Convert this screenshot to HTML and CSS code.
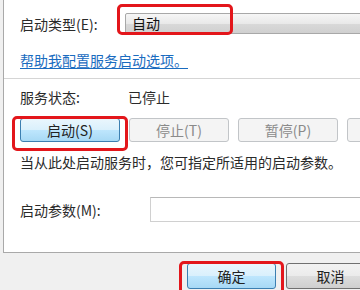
FILE: index.html
```html
<!DOCTYPE html>
<html lang="zh-CN">
<head>
<meta charset="utf-8">
<link rel="stylesheet" href="styles.css">
</head>
<body>
<div class="page">
  <div class="panel">
    <div class="row row-type">
      <span class="label label-type">启动类型(E):</span>
      <div class="select"><span class="select-text">自动</span></div>
    </div>
    <div class="row row-link"><a class="link" href="#">帮助我配置服务启动选项。</a></div>
    <div class="sep"></div>
    <div class="row row-status">
      <span class="label label-status">服务状态:</span>
      <span class="value">已停止</span>
    </div>
    <div class="row row-buttons">
      <button class="btn btn-hot">启动(S)</button>
      <button class="btn btn-off">停止(T)</button>
      <button class="btn btn-off">暂停(P)</button>
      <button class="btn btn-off" aria-label="恢复(R)"></button>
    </div>
    <div class="row row-hint">当从此处启动服务时，您可指定所适用的启动参数。</div>
    <div class="row row-param">
      <span class="label label-param">启动参数(M):</span>
      <div class="input"></div>
    </div>
    <div class="mark mark-select"></div>
    <div class="mark mark-start"></div>
  </div>
  <div class="footer">
    <button class="btn btn-hot btn-foot">确定</button>
    <button class="btn btn-foot">取消</button>
    <div class="mark mark-ok"></div>
  </div>
</div>
</body>
</html>
```

FILE: styles.css
```css
html, body {
  margin: 0;
  padding: 0;
}
body {
  width: 360px;
  height: 290px;
  overflow: hidden;
  background: #f0f0f0;
  font-family: "Noto Sans CJK SC", "Noto Sans", sans-serif;
  font-size: 14px;
  color: #2a2a2a;
}
.page {
  width: 360px;
  height: 290px;
  overflow: hidden;
  position: relative;
}
.panel {
  position: relative;
  margin-left: 3px;
  width: 420px;
  height: 252px;
  background: #fff;
  border-left: 1px solid #a9a9a9;
  border-bottom: 1px solid #a9a9a9;
  display: flex;
  flex-direction: column;
}
.row {
  display: flex;
  align-items: center;
  padding-left: 16px;
  line-height: 20px;
  white-space: nowrap;
}
.row-type {
  margin-top: 13px;
  height: 21px;
}
.label-type { width: 105px; }
.select {
  flex: 1;
  height: 19px;
  border: 1px solid #a8a8a8;
  border-radius: 2px;
  background: linear-gradient(#f6f6f6, #e9e9e9 50%, #d9d9d9 51%, #d0d0d0);
  display: flex;
  align-items: center;
  padding-left: 6px;
}
.select-text { color: #111; line-height: 19px; }
.row-link { margin-top: 16px; height: 20px; }
.link {
  color: #1a6cc0;
  text-decoration: underline;
  text-underline-offset: 2px;
}
.sep {
  margin-top: 8px;
  height: 1px;
  background: #d5d5d5;
}
.row-status { margin-top: 8px; height: 20px; }
.label-status { width: 108px; }
.row-buttons {
  margin-top: 11px;
  gap: 9px;
}
.btn {
  width: 100px;
  height: 24px;
  padding: 0;
  font-family: "Noto Sans CJK SC", "Noto Sans", sans-serif;
  font-size: 14px;
  line-height: 20px;
  color: #222;
  border: 1px solid #707070;
  border-radius: 3px;
  background: linear-gradient(#f2f2f2, #ebebeb 50%, #dddddd 51%, #cfcfcf);
  flex: none;
}
.btn-hot {
  border-color: #3c7fb1;
  background: linear-gradient(#eaf6fd, #d9f0fc 50%, #bee6fd 51%, #a7d9f5);
}
.btn-off {
  border-color: #c2c5c8;
  background: #f4f4f4;
  color: #8a8a8a;
}
.row-hint { margin-top: 10px; height: 20px; }
.row-param { margin-top: 25px; height: 25px; }
.label-param { width: 130px; }
.input {
  flex: 1;
  height: 23px;
  border: 1px solid #d0d0d0;
  border-top-color: #b8b8b8;
  background: #fff;
}
.footer {
  position: relative;
  display: flex;
  gap: 10px;
  padding-left: 187px;
  margin-top: 10px;
}
.btn-foot {
  width: 89px;
  height: 26px;
}
.mark {
  position: absolute;
  border: 3px solid #e3161b;
  border-radius: 5px;
  box-sizing: border-box;
}
.mark-select { left: 113px; top: 4px; width: 116px; height: 31px; }
.mark-start { left: 8px; top: 116px; width: 116px; height: 35px; }
.mark-ok { left: 179px; top: -2px; width: 105px; height: 45px; }
```
